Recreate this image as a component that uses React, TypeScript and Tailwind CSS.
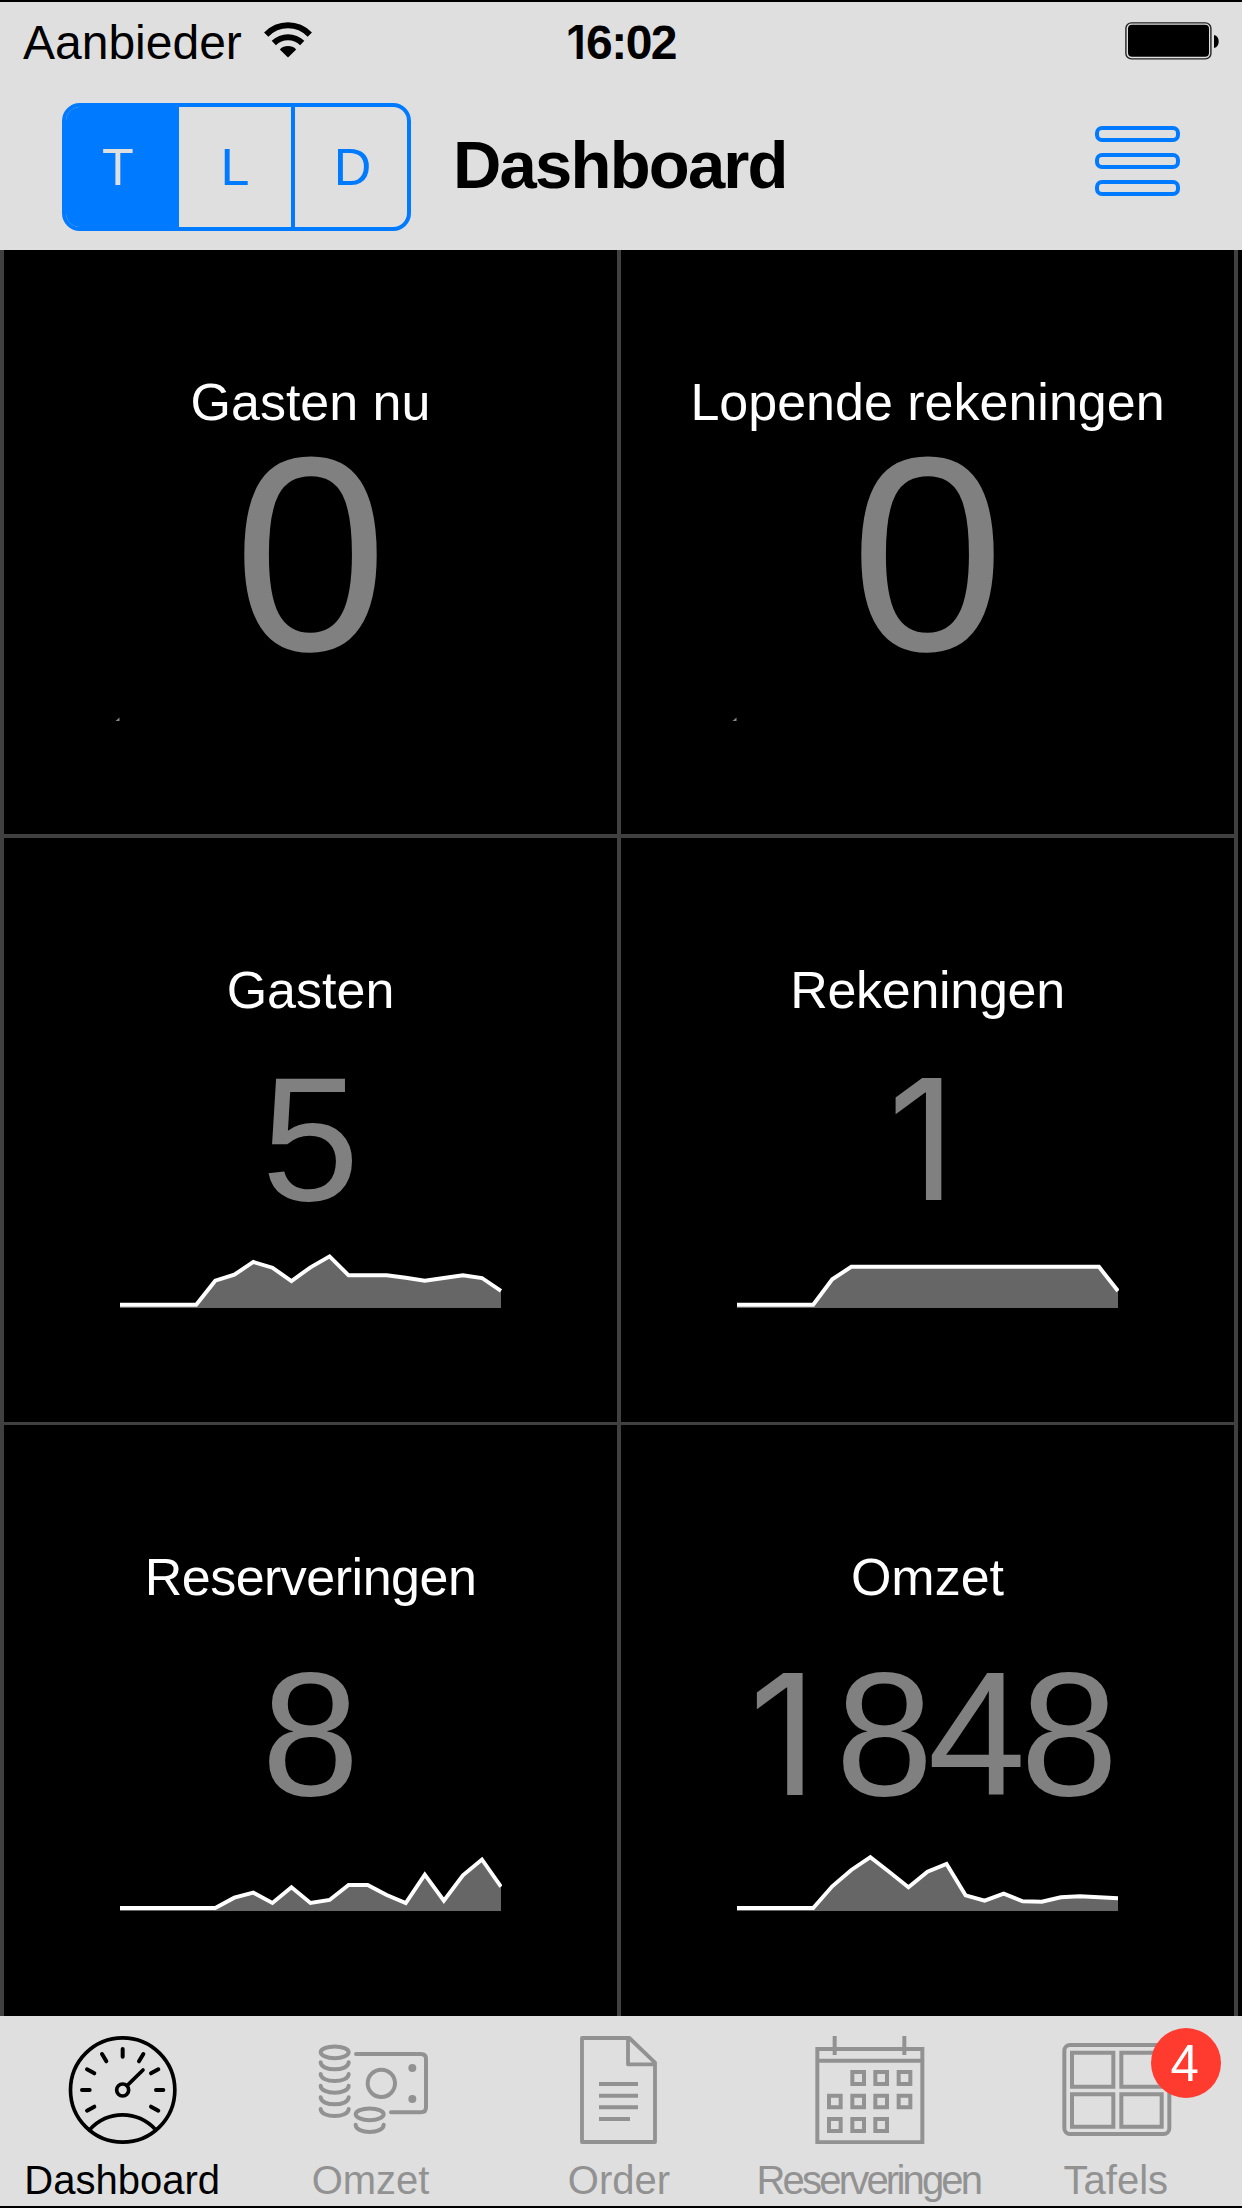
import React from 'react';

const SPARK_STEP = 381 / 20;

/** Area chart; `points` are heights above the baseline in px, evenly spaced. */
function Spark({ points, className }: { points: number[]; className: string }) {
  const line = points.map((p, i) => `${(i * SPARK_STEP).toFixed(2)},${(60 - p).toFixed(2)}`).join(' ');
  return (
    <svg className={'block h-[60px] w-[382px] shrink-0 ' + className} viewBox="0 0 382 60">
      <polygon points={`0,60 ${line} 381,60`} fill="#666" />
      <polyline points={line} fill="none" stroke="#fff" strokeWidth="3.9" />
    </svg>
  );
}

const GASTEN = [3.3, 3.3, 3.3, 3.3, 3.3, 27.3, 33.3, 46, 40.3, 27, 40.7, 51.6, 32.7, 32.7, 32.7, 30.2, 27.3, 30, 32.7, 30, 17];
const REKENINGEN = [3.3, 3.3, 3.3, 3.3, 3.3, 28.7, 41.2, 41.2, 41.2, 41.2, 41.2, 41.2, 41.2, 41.2, 41.2, 41.2, 41.2, 41.2, 41.2, 41.2, 17];
const RESERVERINGEN = [3, 3, 3, 3, 3, 3, 13.3, 18.3, 8, 23.7, 8, 11, 26, 26, 16, 8, 36.3, 10.3, 35.7, 51.5, 24.3];
const OMZET = [3, 3, 3, 3, 3, 24.7, 41, 53.8, 39, 23.7, 39.3, 47, 15.7, 10.3, 17.3, 9.7, 9.3, 13.7, 14.7, 13.7, 12.7];

function Tick() {
  return (
    <svg className="mt-[63px] -ml-[387px] block h-[5px] w-[5px] shrink-0" viewBox="0 0 5 5">
      <path d="M4.5 .5V4H.5Z" fill="#888" />
    </svg>
  );
}

/** A numeral one without a foot, in the same advance as the other digits. */
function One() {
  return <span className="inline-block w-[93px] pr-[18px] text-right font-[Inter] text-[168px] leading-none tracking-normal">1</span>;
}

function Cell({ label, labelClass, children }: { label: string; labelClass: string; children: React.ReactNode }) {
  return (
    <section className="flex flex-col items-center overflow-hidden bg-black pt-[126px]">
      <h2 className={'text-[52px] leading-none whitespace-nowrap text-white ' + labelClass}>{label}</h2>
      {children}
    </section>
  );
}

function Tab({ label, labelClass, viewBox, badge, children }: { label: string; labelClass: string; viewBox: string; badge?: string; children: React.ReactNode }) {
  return (
    <button className="relative flex h-full flex-col items-center pt-[16px]">
      <svg className="block h-[112px] w-[120px]" viewBox={viewBox} fill="none" stroke="currentColor" strokeWidth="12">
        {children}
      </svg>
      <span className={'mt-[16px] text-[40px] leading-none whitespace-nowrap ' + labelClass}>{label}</span>
      {badge && (
        <span className="absolute top-[12px] left-[159px] flex h-[70px] w-[70px] items-center justify-center rounded-full bg-[#ff3b30] pr-[2px] text-[51px] leading-none text-white">
          {badge}
        </span>
      )}
    </button>
  );
}

function Wifi() {
  return (
    <svg className="ml-[22px] block h-[36px] w-[48px]" viewBox="0 0 48 36" fill="none" stroke="#000" strokeWidth="6">
      <path d="M2.2 12.6C14.5 .2 33.5 .2 45.8 12.6" />
      <path d="M9.8 21C17.8 13.2 30.2 13.2 38.2 21" />
      <path d="M24 35.4 15.8 27.4C20.2 23 27.8 23 32.2 27.4Z" fill="#000" stroke="none" />
    </svg>
  );
}

function Battery() {
  return (
    <svg className="block h-[38px] w-[96px]" viewBox="0 0 96 38">
      <rect x=".9" y=".9" width="85" height="36" rx="5.5" fill="none" stroke="#222" strokeWidth="1.4" />
      <rect x="3" y="2.8" width="81" height="32" rx="4" fill="#000" />
      <path d="M89 13C95.3 14 95.3 25 89 26Z" fill="#000" />
    </svg>
  );
}

export default function App() {
  return (
    <div className="flex h-[2208px] w-[1242px] flex-col overflow-hidden bg-black font-['Liberation_Sans',Arial,sans-serif]">
      <header className="mt-[2px] flex h-[248px] shrink-0 flex-col bg-[#dfdfdf]">
        <div className="grid h-[101px] grid-cols-3 items-start pt-[17px] text-[48px] leading-none text-black">
          <div className="flex pl-[23px]">
            <span>Aanbieder</span>
            <div className="pt-[3px]"><Wifi /></div>
          </div>
          <div className="pr-[3px] text-center font-bold tracking-[-1.5px]">
            <span className="inline-block w-[23px] text-right font-[Inter] text-[46px] leading-none font-semibold tracking-normal">1</span>6:02
          </div>
          <div className="flex justify-end pt-[3px] pr-[21px]"><Battery /></div>
        </div>
        <div className="flex h-[147px] items-start">
          <div className="ml-[62px] flex h-[128px] w-[349px] overflow-hidden rounded-[18px] border-4 border-[#007aff] text-[52px] leading-none text-[#007aff]">
            <button className="flex w-[113px] items-center justify-center bg-[#007aff] pr-[9px] text-[#dfdfdf]">T</button>
            <button className="flex w-[112px] items-center justify-center">L</button>
            <button className="flex w-[116px] items-center justify-center border-l-4 border-[#007aff] pl-[3px]">D</button>
          </div>
          <h1 className="ml-[42px] w-[340px] pt-[28px] text-[67px] leading-none font-bold tracking-[-1.8px] text-black">Dashboard</h1>
          <button className="mt-[23px] ml-auto mr-[62px] flex w-[85px] flex-col gap-[11px]">
            <i className="block h-[16px] rounded-[7px] border-4 border-[#007aff]" />
            <i className="block h-[16px] rounded-[7px] border-4 border-[#007aff]" />
            <i className="block h-[16px] rounded-[7px] border-4 border-[#007aff]" />
          </button>
        </div>
      </header>

      <main className="grid h-[1766px] w-[1238px] shrink-0 grid-cols-[613px_613px] grid-rows-[584px_584px_591px] gap-x-[4px] gap-y-[3.5px] bg-[#404040] px-[4px]">
        <Cell label="Gasten nu" labelClass="">
          <div className="mt-[26px] text-[277px] leading-[200px] text-[#808080]">0</div>
          <Tick />
        </Cell>
        <Cell label="Lopende rekeningen" labelClass="">
          <div className="mt-[26px] text-[277px] leading-[200px] text-[#808080]">0</div>
          <Tick />
        </Cell>
        <Cell label="Gasten" labelClass="">
          <div className="mt-[35px] h-[177px] text-[176px] leading-[177px] text-[#808080]">5</div>
          <Spark points={GASTEN} className="mt-[20px]" />
        </Cell>
        <Cell label="Rekeningen" labelClass="tracking-[-0.3px]">
          <div className="mt-[35px] h-[177px] text-[176px] leading-[177px] text-[#808080]"><One /></div>
          <Spark points={REKENINGEN} className="mt-[20px]" />
        </Cell>
        <Cell label="Reserveringen" labelClass="tracking-[-0.5px]">
          <div className="mt-[43px] h-[177px] text-[176px] leading-[177px] text-[#808080]">8</div>
          <Spark points={RESERVERINGEN} className="mt-[28px]" />
        </Cell>
        <Cell label="Omzet" labelClass="">
          <div className="mt-[43px] h-[177px] text-[176px] leading-[177px] tracking-[-5.5px] whitespace-nowrap text-[#808080]"><One />848</div>
          <Spark points={OMZET} className="mt-[28px]" />
        </Cell>
      </main>

      <nav className="h-[190px] shrink-0 bg-[#dfdfdf] text-[#929292]">
        <div className="-ml-[2px] grid h-full w-[1242px] grid-cols-5">
          <Tab label="Dashboard" labelClass="text-black" viewBox="187 96 360 336">
            <g stroke="#000" strokeLinecap="round">
              <circle cx="369" cy="270" r="156.5" strokeWidth="11" />
              <circle cx="369" cy="270" r="18" strokeWidth="11" />
              <path strokeWidth="11" d="M383 256 430 210M270 389C325 330 412 330 468 389" />
              <path strokeWidth="12" d="M369 147V170M307 162 320 184M431 162 418 184M262 208 284 220M476 208 454 220M247 270H270M469 270H491M262 332 284 320M476 332 454 320" />
            </g>
          </Tab>
          <Tab label="Omzet" labelClass="" viewBox="930 96 360 336">
            <g strokeLinecap="round" strokeWidth="12">
              <ellipse cx="1001" cy="157" rx="42" ry="17.5" />
              <path d="M959 187C959 215 1043 215 1043 187M959 222C959 250 1043 250 1043 222M959 257C959 285 1043 285 1043 257M959 292C959 320 1043 320 1043 292M959 327C959 355 1043 355 1043 327" />
              <ellipse cx="1106" cy="343" rx="42" ry="17.5" />
              <path d="M1064 374C1064 403 1148 403 1148 374" />
              <path d="M1065 162H1260Q1275 162 1275 177V322Q1275 337 1260 337H1170" />
              <circle cx="1141" cy="250" r="41" />
              <circle cx="1234" cy="204" r="12" fill="currentColor" stroke="none" />
              <circle cx="1234" cy="297" r="12" fill="currentColor" stroke="none" />
            </g>
          </Tab>
          <Tab label="Order" labelClass="" viewBox="57 96 360 336">
            <path strokeLinejoin="round" strokeWidth="11.5" d="M126 114H268L345 188V426H126ZM264 114V193H345" />
            <path d="M177 252H294M177 287H294M177 322H294M177 357H270" />
          </Tab>
          <Tab label="Reserveringen" labelClass="pl-[2px] tracking-[-2.8px]" viewBox="800 96 360 336">
            <path d="M831 147H1146V427H831ZM831 182H1146M883 108V165M1092 108V165" strokeWidth="12" />
            <path d="M936 216h35v36h-35zM1005 216h35v36h-35zM1075 216h35v36h-35zM866 287h35v35h-35zM936 287h35v35h-35zM1005 287h35v35h-35zM1075 287h35v35h-35zM866 357h35v36h-35zM936 357h35v36h-35zM1005 357h35v36h-35z" />
          </Tab>
          <Tab label="Tafels" labelClass="" viewBox="347 96 360 336" badge="4">
            <rect x="372" y="135" width="315" height="267" rx="17" />
            <path d="M395 158H519V260H395ZM543 158H664V260H543ZM395 283H519V380H395ZM543 283H664V380H543Z" />
          </Tab>
        </div>
      </nav>
    </div>
  );
}
